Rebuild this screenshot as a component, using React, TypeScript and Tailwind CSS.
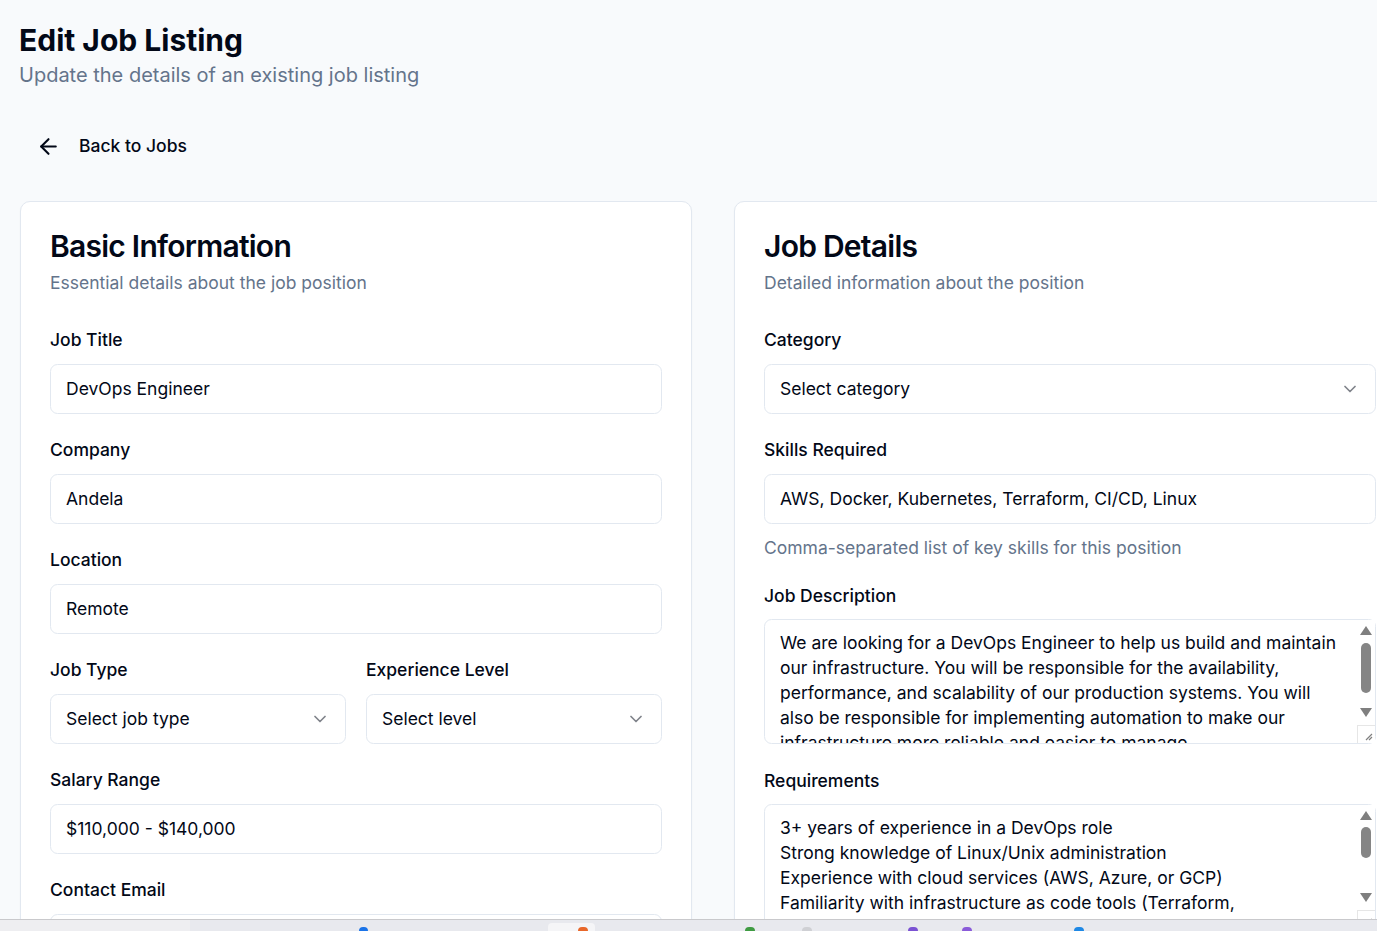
import React from "react";

const FONT = { fontFamily: "Inter, 'Noto Sans', sans-serif" };

function Chevron() {
  return (
    <svg width="20" height="20" viewBox="0 0 24 24" fill="none" stroke="currentColor" strokeWidth="2" strokeLinecap="round" strokeLinejoin="round" className="opacity-50 shrink-0">
      <path d="m6 9 6 6 6-6" />
    </svg>
  );
}

function Label({ children }: { children: React.ReactNode }) {
  return <div className="h-[20px] leading-[20px] text-[17.5px] font-medium text-[#020817]">{children}</div>;
}

function Input({ value }: { value: string }) {
  return (
    <div className="mt-[14px] h-[50px] rounded-[7.5px] border border-[#e2e8f0] bg-white px-[15px] flex items-center text-[17.5px] text-[#020817]">
      {value}
    </div>
  );
}

function Select({ value }: { value: string }) {
  return (
    <div className="mt-[14px] h-[50px] rounded-[7.5px] border border-[#e2e8f0] bg-white px-[15px] flex items-center justify-between text-[17.5px] text-[#020817]">
      <span>{value}</span>
      <Chevron />
    </div>
  );
}

function Field({ label, children, extra = "" }: { label: string; children: React.ReactNode; extra?: string }) {
  return (
    <div className={"flex flex-col " + extra}>
      <Label>{label}</Label>
      {children}
    </div>
  );
}

function FakeScrollbar({ thumbTop, thumbHeight }: { thumbTop: number; thumbHeight: number }) {
  return (
    <div className="absolute right-[1px] top-[1px] bottom-[1px] w-[18px] bg-white">
      <div className="absolute left-1/2 -translate-x-1/2 top-[6px] w-0 h-0 border-l-[6px] border-r-[6px] border-b-[9px] border-l-transparent border-r-transparent border-b-[#7f7f7f]" />
      <div className="absolute left-1/2 -translate-x-1/2 w-[10px] rounded-full bg-[#858585]" style={{ top: thumbTop, height: thumbHeight }} />
      <div className="absolute left-1/2 -translate-x-1/2 top-[88px] w-0 h-0 border-l-[6px] border-r-[6px] border-t-[9px] border-l-transparent border-r-transparent border-t-[#7f7f7f]" />
      <div className="absolute left-0 right-0 top-[105px] h-[18px] border-l border-t border-[#e6e6e6] bg-white">
        <svg width="18" height="18" viewBox="0 0 18 18" className="absolute right-0 bottom-0">
          <path d="M15 9 L9 15 M15 12 L12 15" stroke="#7f7f7f" strokeWidth="1.2" />
        </svg>
      </div>
    </div>
  );
}

function TextArea({ value, thumbTop, thumbHeight }: { value: string; thumbTop: number; thumbHeight: number }) {
  return (
    <div className="relative mt-[13px] h-[125px]">
      <textarea
        readOnly
        defaultValue={value}
        className="block w-full h-[125px] resize-none overflow-hidden rounded-[7.5px] border border-[#e2e8f0] bg-white pl-[15px] pr-[33px] pt-[10px] text-[17.5px] leading-[25px] text-[#020817] outline-none"
        style={FONT}
      />
      <FakeScrollbar thumbTop={thumbTop} thumbHeight={thumbHeight} />
    </div>
  );
}

function CardHeader({ title, desc }: { title: string; desc: string }) {
  return (
    <div className="pt-[29px] pb-[35px]">
      <div className="h-[30px] leading-[30px] text-[30px] font-semibold tracking-tight text-[#020817]">{title}</div>
      <div className="mt-[9px] h-[25px] leading-[25px] text-[17.5px] text-[#64748b]">{desc}</div>
    </div>
  );
}

export default function App() {
  const description =
    "We are looking for a DevOps Engineer to help us build and maintain our infrastructure. You will be responsible for the availability, performance, and scalability of our production systems. You will also be responsible for implementing automation to make our infrastructure more reliable and easier to manage.";
  const requirements =
    "3+ years of experience in a DevOps role\nStrong knowledge of Linux/Unix administration\nExperience with cloud services (AWS, Azure, or GCP)\nFamiliarity with infrastructure as code tools (Terraform, CloudFormation)\nExperience with containerization (Docker, Kubernetes)\nKnowledge of CI/CD pipelines and tools\nScripting skills (Bash, Python)\nStrong problem-solving and communication skills";

  return (
    <div className="relative w-[1377px] h-[931px] overflow-hidden bg-[#f8fafc]" style={FONT}>
      <div className="px-[20px] pt-[22px] w-[1430px]">
        <h1 className="-ml-[1px] h-[36px] leading-[36px] text-[30px] font-bold text-[#020817]">Edit Job Listing</h1>
        <p className="-ml-[1px] mt-[3px] h-[28px] leading-[28px] text-[20px] text-[#64748b]">Update the details of an existing job listing</p>

        <div className="mt-[32px] h-[50px] flex items-center">
          <div className="h-[50px] flex items-center pl-[16px] pr-[20px] rounded-[7.5px] text-[#020817]">
            <svg width="25" height="25" viewBox="0 0 24 24" fill="none" stroke="currentColor" strokeWidth="2" strokeLinecap="round" strokeLinejoin="round">
              <path d="m12 19-7-7 7-7" />
              <path d="M19 12H5" />
            </svg>
            <span className="ml-[18px] text-[17.5px] font-medium">Back to Jobs</span>
          </div>
        </div>

        <div className="mt-[30px] grid grid-cols-[672px_672px] gap-[42px]">
          {/* Basic Information */}
          <div className="rounded-[10px] border border-[#e2e8f0] bg-white px-[29px] h-[760px] shadow-[0_1px_2px_rgba(0,0,0,0.04)]">
            <CardHeader title="Basic Information" desc="Essential details about the job position" />
            <div className="flex flex-col gap-[26px]">
              <Field label="Job Title"><Input value="DevOps Engineer" /></Field>
              <Field label="Company"><Input value="Andela" /></Field>
              <Field label="Location"><Input value="Remote" /></Field>
              <div className="grid grid-cols-2 gap-[20px]">
                <Field label="Job Type"><Select value="Select job type" /></Field>
                <Field label="Experience Level"><Select value="Select level" /></Field>
              </div>
              <Field label="Salary Range"><Input value="$110,000 - $140,000" /></Field>
              <Field label="Contact Email"><Input value="" /></Field>
            </div>
          </div>

          {/* Job Details */}
          <div className="rounded-[10px] border border-[#e2e8f0] bg-white px-[29px] h-[760px] shadow-[0_1px_2px_rgba(0,0,0,0.04)]">
            <CardHeader title="Job Details" desc="Detailed information about the position" />
            <div className="flex flex-col gap-[26px]">
              <Field label="Category"><Select value="Select category" /></Field>
              <Field label="Skills Required">
                <Input value="AWS, Docker, Kubernetes, Terraform, CI/CD, Linux" />
                <div className="mt-[10.5px] h-[25px] leading-[25px] text-[17.5px] text-[#64748b]">Comma-separated list of key skills for this position</div>
              </Field>
              <Field label="Job Description">
                <TextArea value={description} thumbTop={23} thumbHeight={50} />
              </Field>
              <Field label="Requirements" extra="mt-[1px]">
                <TextArea value={requirements} thumbTop={22} thumbHeight={31} />
              </Field>
            </div>
          </div>
        </div>
      </div>

      {/* OS taskbar strip at the bottom */}
      <div className="absolute left-0 right-0 bottom-0 h-[12px] border-t border-[#c9c9cc] bg-[#e8e9ee] overflow-hidden">
        <div className="absolute left-0 top-0 bottom-0 w-[190px] bg-[#eeeef1]" />
        <div className="absolute left-[548px] top-[3px] w-[47px] h-[12px] rounded-t-[4px] bg-[#f5f5f7]" />
        <div className="absolute left-[359px] top-[7px] w-[9px] h-[8px] rounded-full bg-[#1a73e8]" />
        <div className="absolute left-[578px] top-[7px] w-[10px] h-[8px] rounded-full bg-[#e8672a]" />
        <div className="absolute left-[745px] top-[7px] w-[10px] h-[8px] rounded-full bg-[#3f9b42]" />
        <div className="absolute left-[802px] top-[7px] w-[10px] h-[8px] rounded-full bg-[#cfd0d4]" />
        <div className="absolute left-[908px] top-[7px] w-[10px] h-[8px] rounded-full bg-[#7b52d3]" />
        <div className="absolute left-[962px] top-[7px] w-[10px] h-[8px] rounded-full bg-[#8a5bd9]" />
        <div className="absolute left-[1074px] top-[7px] w-[10px] h-[8px] rounded-full bg-[#1e88e5]" />
      </div>
    </div>
  );
}
